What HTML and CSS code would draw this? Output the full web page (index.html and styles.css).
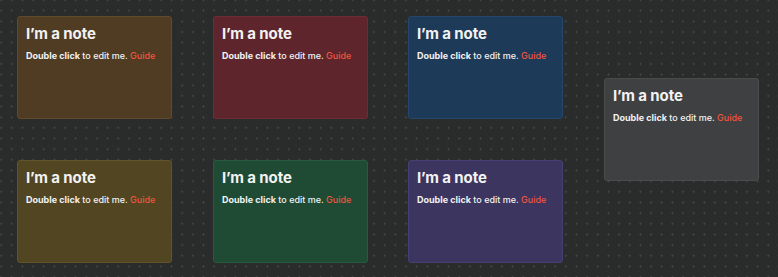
FILE: index.html
```html
<!DOCTYPE html>
<html lang="en">
<head>
  <meta charset="UTF-8">
  <meta name="viewport" content="width=device-width, initial-scale=1.0">
  <title>Notes board</title>
  <link rel="stylesheet" href="styles.css">
</head>
<body>
  <div class="board">
    <div class="note brown" style="left:17px; top:16px">
      <h2>I’m a note</h2>
      <p><b>Double click</b> to edit me. <a href="#">Guide</a></p>
    </div>
    <div class="note red" style="left:213px; top:16px">
      <h2>I’m a note</h2>
      <p><b>Double click</b> to edit me. <a href="#">Guide</a></p>
    </div>
    <div class="note blue" style="left:408px; top:16px">
      <h2>I’m a note</h2>
      <p><b>Double click</b> to edit me. <a href="#">Guide</a></p>
    </div>
    <div class="note gray" style="left:604px; top:78px">
      <h2>I’m a note</h2>
      <p><b>Double click</b> to edit me. <a href="#">Guide</a></p>
    </div>
    <div class="note olive" style="left:17px; top:160px">
      <h2>I’m a note</h2>
      <p><b>Double click</b> to edit me. <a href="#">Guide</a></p>
    </div>
    <div class="note green" style="left:213px; top:160px">
      <h2>I’m a note</h2>
      <p><b>Double click</b> to edit me. <a href="#">Guide</a></p>
    </div>
    <div class="note purple" style="left:408px; top:160px">
      <h2>I’m a note</h2>
      <p><b>Double click</b> to edit me. <a href="#">Guide</a></p>
    </div>
  </div>
</body>
</html>
```
FILE: styles.css
```css
/* Notes board */
body {
  margin: 0;
  font-family: Inter, "Noto Sans", Arial, sans-serif;
  background-color: #2a2b2b;
}
.board {
  position: relative;
  width: 778px;
  height: 277px;
  overflow: hidden;
  background-color: #2a2b2b;
  background-image: radial-gradient(circle, #4d4e4e 0.8px, transparent 1.1px);
  background-size: 10.67px 10.67px;
  background-position: -4.3px -5.3px;
}
.note {
  position: absolute;
  box-sizing: border-box;
  width: 155px;
  height: 103px;
  padding: 7px 8px;
  border: 1px solid;
  border-radius: 3px;
  color: #f2f2f2;
}
.note h2 {
  margin: 0;
  font-size: 15px;
  font-weight: 700;
  line-height: 19px;
  letter-spacing: -0.1px;
}
.note p {
  margin: 7px 0 0;
  font-size: 9px;
  font-weight: 500;
  line-height: 11px;
}
.note b {
  font-weight: 700;
}
.note a {
  color: #f0553e;
  text-decoration: none;
}
.brown { background-color: #503c22; border-color: #5f4a2a; }
.red { background-color: #5e262c; border-color: #6e2d34; }
.blue { background-color: #1e3a59; border-color: #25476b; }
.gray { background-color: #3f4042; border-color: #4a4b4d; }
.olive { background-color: #524622; border-color: #62542a; }
.green { background-color: #1f4a34; border-color: #275a3f; }
.purple { background-color: #3b355f; border-color: #463f72; }
```
